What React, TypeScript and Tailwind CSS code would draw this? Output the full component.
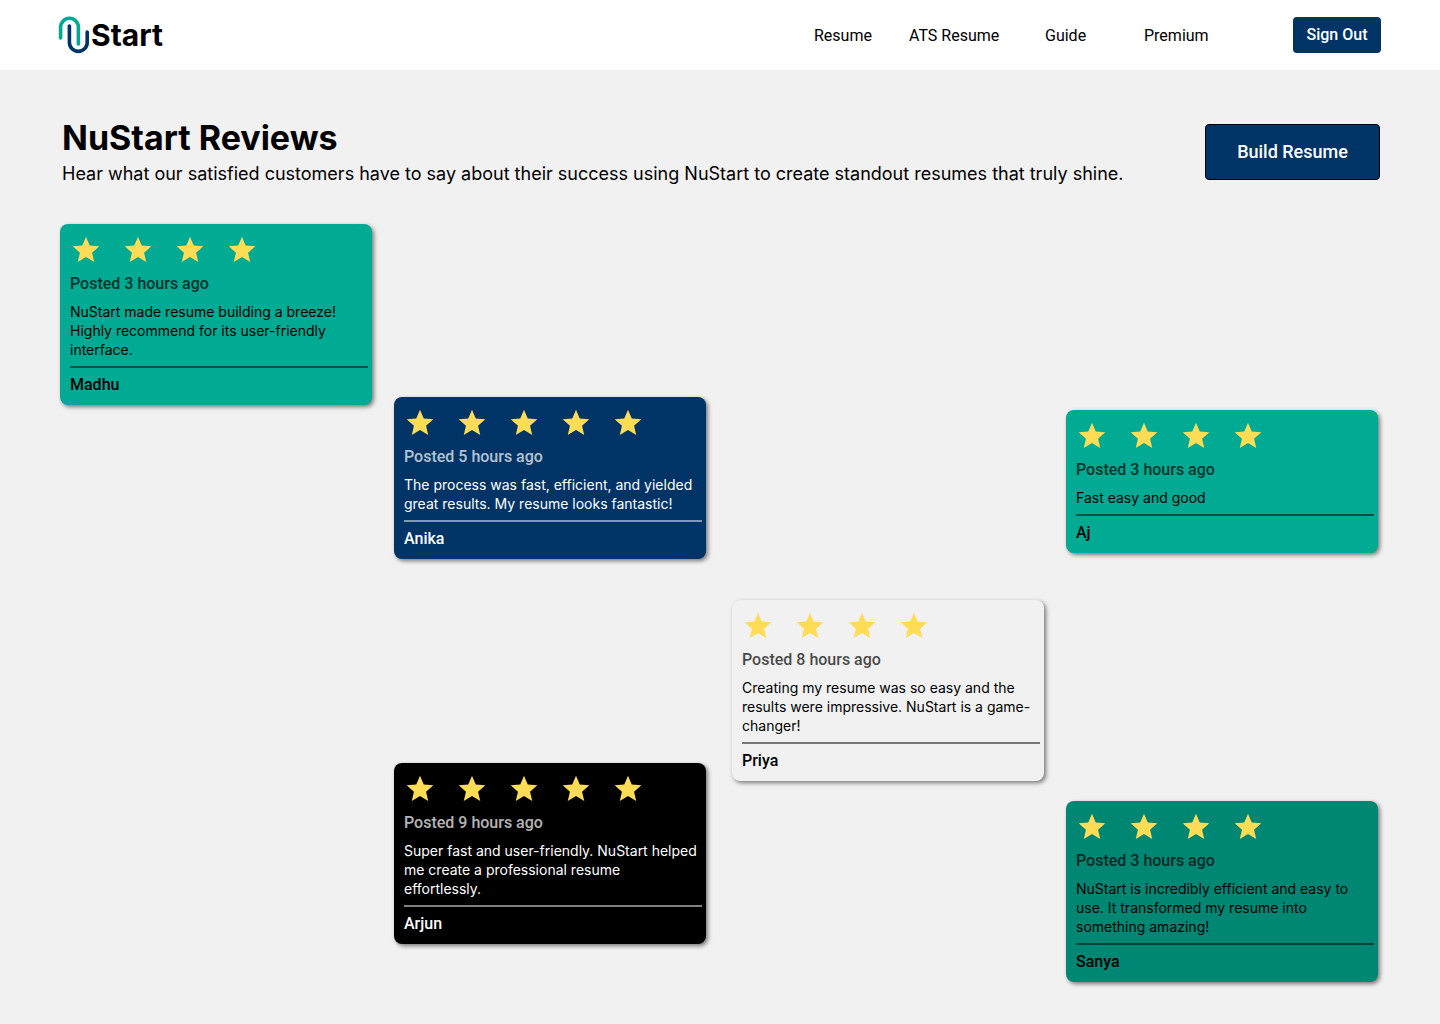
type Tone = "teal" | "navy" | "light" | "black" | "forest";

type Review = {
  name: string;
  stars: number;
  posted: string;
  text: string;
  tone: Tone;
};

const tones: Record<Tone, string> = {
  teal: "bg-[#00aa93] text-black",
  navy: "bg-[#003366] text-white",
  light: "bg-[#f1f1f1] text-black",
  black: "bg-black text-white",
  forest: "bg-[#008774] text-black",
};

const madhu: Review = {
  name: "Madhu",
  stars: 4,
  posted: "Posted 3 hours ago",
  text: "NuStart made resume building a breeze! Highly recommend for its user-friendly interface.",
  tone: "teal",
};
const anika: Review = {
  name: "Anika",
  stars: 5,
  posted: "Posted 5 hours ago",
  text: "The process was fast, efficient, and yielded great results. My resume looks fantastic!",
  tone: "navy",
};
const arjun: Review = {
  name: "Arjun",
  stars: 5,
  posted: "Posted 9 hours ago",
  text: "Super fast and user-friendly. NuStart helped me create a professional resume effortlessly.",
  tone: "black",
};
const priya: Review = {
  name: "Priya",
  stars: 4,
  posted: "Posted 8 hours ago",
  text: "Creating my resume was so easy and the results were impressive. NuStart is a game-changer!",
  tone: "light",
};
const aj: Review = {
  name: "Aj",
  stars: 4,
  posted: "Posted 3 hours ago",
  text: "Fast easy and good",
  tone: "teal",
};
const sanya: Review = {
  name: "Sanya",
  stars: 4,
  posted: "Posted 3 hours ago",
  text: "NuStart is incredibly efficient and easy to use. It transformed my resume into something amazing!",
  tone: "forest",
};

function Star() {
  return (
    <svg viewBox="0 0 24 24" className="size-8 fill-[#ffdc55]" aria-hidden="true">
      <path d="M12 17.27 18.18 21l-1.64-7.03L22 9.24l-7.19-.61L12 2 9.19 8.63 2 9.24l5.46 4.73L5.82 21z" />
    </svg>
  );
}

function ReviewCard({ review }: { review: Review }) {
  return (
    <article
      className={`rounded-lg pt-2.5 pr-1 pb-[11px] pl-2.5 shadow-[2px_2px_4px_rgba(0,0,0,0.5)] ${tones[review.tone]}`}
    >
      <div className="flex gap-5" role="img" aria-label={`${review.stars} stars`}>
        {Array.from({ length: review.stars }, (_, i) => (
          <Star key={i} />
        ))}
      </div>
      <p className="mt-2 font-[Roboto,sans-serif] text-base leading-[19px] font-medium opacity-70">{review.posted}</p>
      <p className="mt-[9px] pr-0.5 font-[Inter,sans-serif] text-sm leading-[19px]">{review.text}</p>
      <hr className="mt-[7px] border-t-2 border-current opacity-50" />
      <p className="mt-[7px] font-[Roboto,sans-serif] text-base leading-[19px] font-medium">{review.name}</p>
    </article>
  );
}

function Logo() {
  return (
    <a href="#" className="flex items-center" aria-label="NuStart">
      <svg viewBox="0 0 32 38" className="h-[38px] w-8" fill="none" strokeWidth="3.6" strokeLinecap="round">
        <path d="M2.6 22V11.2a8.9 8.9 0 0 1 17.8 0V28" stroke="#00aa93" />
        <path d="M11.4 10v16.5a8.9 8.9 0 0 0 17.8 0V16" stroke="#003366" />
      </svg>
      <span className="pl-px font-[Inter,sans-serif] text-[30px] leading-9 font-bold">Start</span>
    </a>
  );
}

export default function App() {
  return (
    <div className="min-h-screen bg-[#f1f1f1] font-[Roboto,sans-serif] text-black">
      <header className="flex h-[70px] items-center justify-between bg-white pr-[59px] pl-[58px]">
        <Logo />
        <div className="flex items-center">
          <nav className="flex items-center pt-0.5 text-base">
            <a href="#" className="w-[95px]">Resume</a>
            <a href="#" className="w-[136px]">ATS Resume</a>
            <a href="#" className="w-[99px]">Guide</a>
            <a href="#" className="w-[149px]">Premium</a>
          </nav>
          <button type="button" className="h-9 w-[88px] rounded bg-[#003366] text-base font-medium text-white">
            Sign Out
          </button>
        </div>
      </header>

      <main className="px-[60px] pt-[46px] pb-[42px]">
        <div className="flex items-start justify-between">
          <div className="pl-0.5">
            <h1 className="font-[Inter,sans-serif] text-[34px] leading-[44px] font-bold">NuStart Reviews</h1>
            <p className="mt-[3px] font-[Inter,sans-serif] text-lg leading-[22px]">
              Hear what our satisfied customers have to say about their success using NuStart to create standout resumes
              that truly shine.
            </p>
          </div>
          <button
            type="button"
            className="mt-2 h-14 w-[175px] shrink-0 rounded border border-black bg-[#003366] text-lg font-medium text-white"
          >
            Build Resume
          </button>
        </div>

        <div className="mt-[39px] grid grid-cols-2 gap-[26px] pr-0.5">
          <div className="grid grid-cols-2 items-start gap-[22px]">
            <ReviewCard review={madhu} />
            <div className="flex flex-col gap-[204px] pt-[173px]">
              <ReviewCard review={anika} />
              <ReviewCard review={arjun} />
            </div>
          </div>
          <div className="grid grid-cols-2 items-start gap-[22px]">
            <div className="pt-[376px]">
              <ReviewCard review={priya} />
            </div>
            <div className="flex flex-col gap-[248px] pt-[186px]">
              <ReviewCard review={aj} />
              <ReviewCard review={sanya} />
            </div>
          </div>
        </div>
      </main>
    </div>
  );
}
